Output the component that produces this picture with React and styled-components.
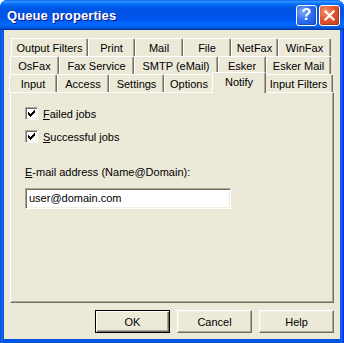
import React from "react";
import styled, { createGlobalStyle } from "styled-components";

const GlobalStyle = createGlobalStyle`
  html, body {
    margin: 0;
    padding: 0;
    background: #ffffff;
  }
  body {
    font-family: "Liberation Sans", Arial, sans-serif;
    font-size: 11px;
    color: #000000;
  }
`;

const Window = styled.div`
  width: 344px;
  height: 343px;
  box-sizing: border-box;
  display: flex;
  flex-direction: column;
  border-radius: 7px 7px 0 0;
  overflow: hidden;
  background: linear-gradient(to right, #0831d9 0px, #166aee 1px, #0055e5 4px, #0055e5 340px, #166aee 342px, #0831d9 343px);
`;

const TitleBar = styled.div`
  height: 30px;
  flex: none;
  display: flex;
  align-items: center;
  padding: 0 4px 0 7px;
  background: linear-gradient(
    to bottom,
    #0058ee 0%,
    #3593ff 4%,
    #288eff 7%,
    #127dff 10%,
    #036ffc 14%,
    #0262ee 20%,
    #0057e5 28%,
    #0054e3 36%,
    #0055eb 56%,
    #005bf5 68%,
    #026afe 80%,
    #0062ef 88%,
    #0052d6 94%,
    #0040ab 97%,
    #003092 100%
  );
`;

const Title = styled.div`
  flex: 1;
  color: #ffffff;
  font-weight: bold;
  font-size: 13px;
  letter-spacing: 0.1px;
  text-shadow: 1px 1px 0 #0a1883;
  padding-top: 1px;
`;

const CaptionButton = styled.div`
  width: 21px;
  height: 21px;
  box-sizing: border-box;
  margin-left: 2px;
  border: 1px solid #ffffff;
  border-radius: 3px;
  display: flex;
  align-items: center;
  justify-content: center;
  color: #ffffff;
  font-weight: bold;
  font-size: 16px;
  background: ${(p) =>
    p.$close
      ? "radial-gradient(circle at 30% 30%, #f1936f 0%, #e1552e 45%, #c8391a 100%)"
      : "radial-gradient(circle at 30% 30%, #7fa8fb 0%, #2f6ff0 45%, #1c4fd8 100%)"};
  box-shadow: inset -1px -1px 0 rgba(0, 0, 0, 0.2);
`;

const Body = styled.div`
  flex: 1;
  margin: 0 4px 4px;
  background: #ece9d8;
  padding: 8px 6px 6px 5px;
  display: flex;
  flex-direction: column;
`;

const TabRow = styled.div`
  display: flex;
  height: 18px;
  margin-left: ${(p) => p.$indent}px;
`;

const Tab = styled.div`
  width: ${(p) => p.$w}px;
  box-sizing: border-box;
  flex: none;
  display: flex;
  align-items: center;
  justify-content: center;
  padding-top: 1px;
  background: #ece9d8;
  border-top: 1px solid #ffffff;
  border-left: 1px solid #ffffff;
  border-right: 1px solid #716f64;
  box-shadow: inset -1px 0 0 #aca899;
  border-radius: 2px 2px 0 0;
  white-space: nowrap;
  ${(p) =>
    p.$active &&
    `
    position: relative;
    z-index: 1;
    height: 21px;
    margin: -2px -2px -1px;
    width: ${p.$w + 4}px;
    align-items: flex-start;
    padding-top: 3px;
  `}
`;

const Panel = styled.div`
  height: 211px;
  box-sizing: border-box;
  margin-left: 1px;
  border-top: 1px solid #ffffff;
  border-left: 1px solid #ffffff;
  border-right: 1px solid #716f64;
  border-bottom: 1px solid #716f64;
  box-shadow: inset -1px -1px 0 #aca899;
  padding: 14px 14px 0 14px;
  display: flex;
  flex-direction: column;
`;

const CheckRow = styled.label`
  display: flex;
  align-items: center;
  height: 13px;
  margin-bottom: 10px;
`;

const CheckBox = styled.span`
  width: 13px;
  height: 13px;
  box-sizing: border-box;
  flex: none;
  background: #ffffff;
  border-top: 1px solid #aca899;
  border-left: 1px solid #aca899;
  border-right: 1px solid #ffffff;
  border-bottom: 1px solid #ffffff;
  box-shadow: inset 1px 1px 0 #716f64, inset -1px -1px 0 #f1efe2;
  display: flex;
  align-items: center;
  justify-content: center;
  margin-right: 5px;
`;

const Key = styled.span`
  text-decoration: underline;
`;

const FieldLabel = styled.div`
  margin-top: 13px;
  line-height: 13px;
`;

const TextField = styled.div`
  width: 206px;
  height: 21px;
  box-sizing: border-box;
  margin-top: 9px;
  background: #ffffff;
  border-top: 1px solid #aca899;
  border-left: 1px solid #aca899;
  border-right: 1px solid #ffffff;
  border-bottom: 1px solid #ffffff;
  box-shadow: inset 1px 1px 0 #716f64, inset -1px -1px 0 #f1efe2;
  padding: 3px 0 0 3px;
`;

const Footer = styled.div`
  display: flex;
  justify-content: flex-end;
  gap: 7px;
  margin-top: 7px;
`;

const Button = styled.div`
  width: 75px;
  height: 23px;
  box-sizing: border-box;
  display: flex;
  align-items: center;
  justify-content: center;
  background: #ece9d8;
  border-top: 1px solid #ffffff;
  border-left: 1px solid #ffffff;
  border-right: 1px solid #716f64;
  border-bottom: 1px solid #716f64;
  box-shadow: inset -1px -1px 0 #aca899, inset 1px 1px 0 #f1efe2;
  ${(p) =>
    p.$default &&
    `
    border: 1px solid #000000;
    box-shadow: inset 1px 1px 0 #ffffff, inset -1px -1px 0 #716f64, inset -2px -2px 0 #aca899;
  `}
`;

const tabRows = [
  {
    indent: 2,
    tabs: [
      ["Output Filters", 77],
      ["Print", 47],
      ["Mail", 48],
      ["File", 48],
      ["NetFax", 47],
      ["WinFax", 53],
    ],
  },
  {
    indent: 1,
    tabs: [
      ["OsFax", 49],
      ["Fax Service", 75],
      ["SMTP (eMail)", 84],
      ["Esker", 48],
      ["Esker Mail", 65],
    ],
  },
  {
    indent: 0,
    tabs: [
      ["Input", 48],
      ["Access", 52],
      ["Settings", 55],
      ["Options", 50],
      ["Notify", 50, true],
      ["Input Filters", 69],
    ],
  },
];

const Check = () => (
  <svg width="7" height="7" viewBox="0 0 7 7" shapeRendering="crispEdges">
    <path d="M0 2h1v3H0zM1 3h1v3H1zM2 4h1v3H2zM3 3h1v3H3zM4 2h1v3H4zM5 1h1v3H5zM6 0h1v3H6z" fill="#000" />
  </svg>
);

export default function App() {
  return (
    <>
      <GlobalStyle />
      <Window>
        <TitleBar>
          <Title>Queue properties</Title>
          <CaptionButton>?</CaptionButton>
          <CaptionButton $close>
            <svg width="11" height="11" viewBox="0 0 11 11">
              <path d="M1.5 1.5L9.5 9.5M9.5 1.5L1.5 9.5" stroke="#fff" strokeWidth="2.2" strokeLinecap="square" />
            </svg>
          </CaptionButton>
        </TitleBar>
        <Body>
          {tabRows.map((row, i) => (
            <TabRow key={i} $indent={row.indent}>
              {row.tabs.map(([label, w, active]) => (
                <Tab key={label} $w={w} $active={active}>
                  {label}
                </Tab>
              ))}
            </TabRow>
          ))}
          <Panel>
            <CheckRow>
              <CheckBox>
                <Check />
              </CheckBox>
              <span>
                <Key>F</Key>ailed jobs
              </span>
            </CheckRow>
            <CheckRow>
              <CheckBox>
                <Check />
              </CheckBox>
              <span>
                <Key>S</Key>uccessful jobs
              </span>
            </CheckRow>
            <FieldLabel>
              <Key>E</Key>-mail address (Name@Domain):
            </FieldLabel>
            <TextField>user@domain.com</TextField>
          </Panel>
          <Footer>
            <Button $default>OK</Button>
            <Button>Cancel</Button>
            <Button>Help</Button>
          </Footer>
        </Body>
      </Window>
    </>
  );
}
